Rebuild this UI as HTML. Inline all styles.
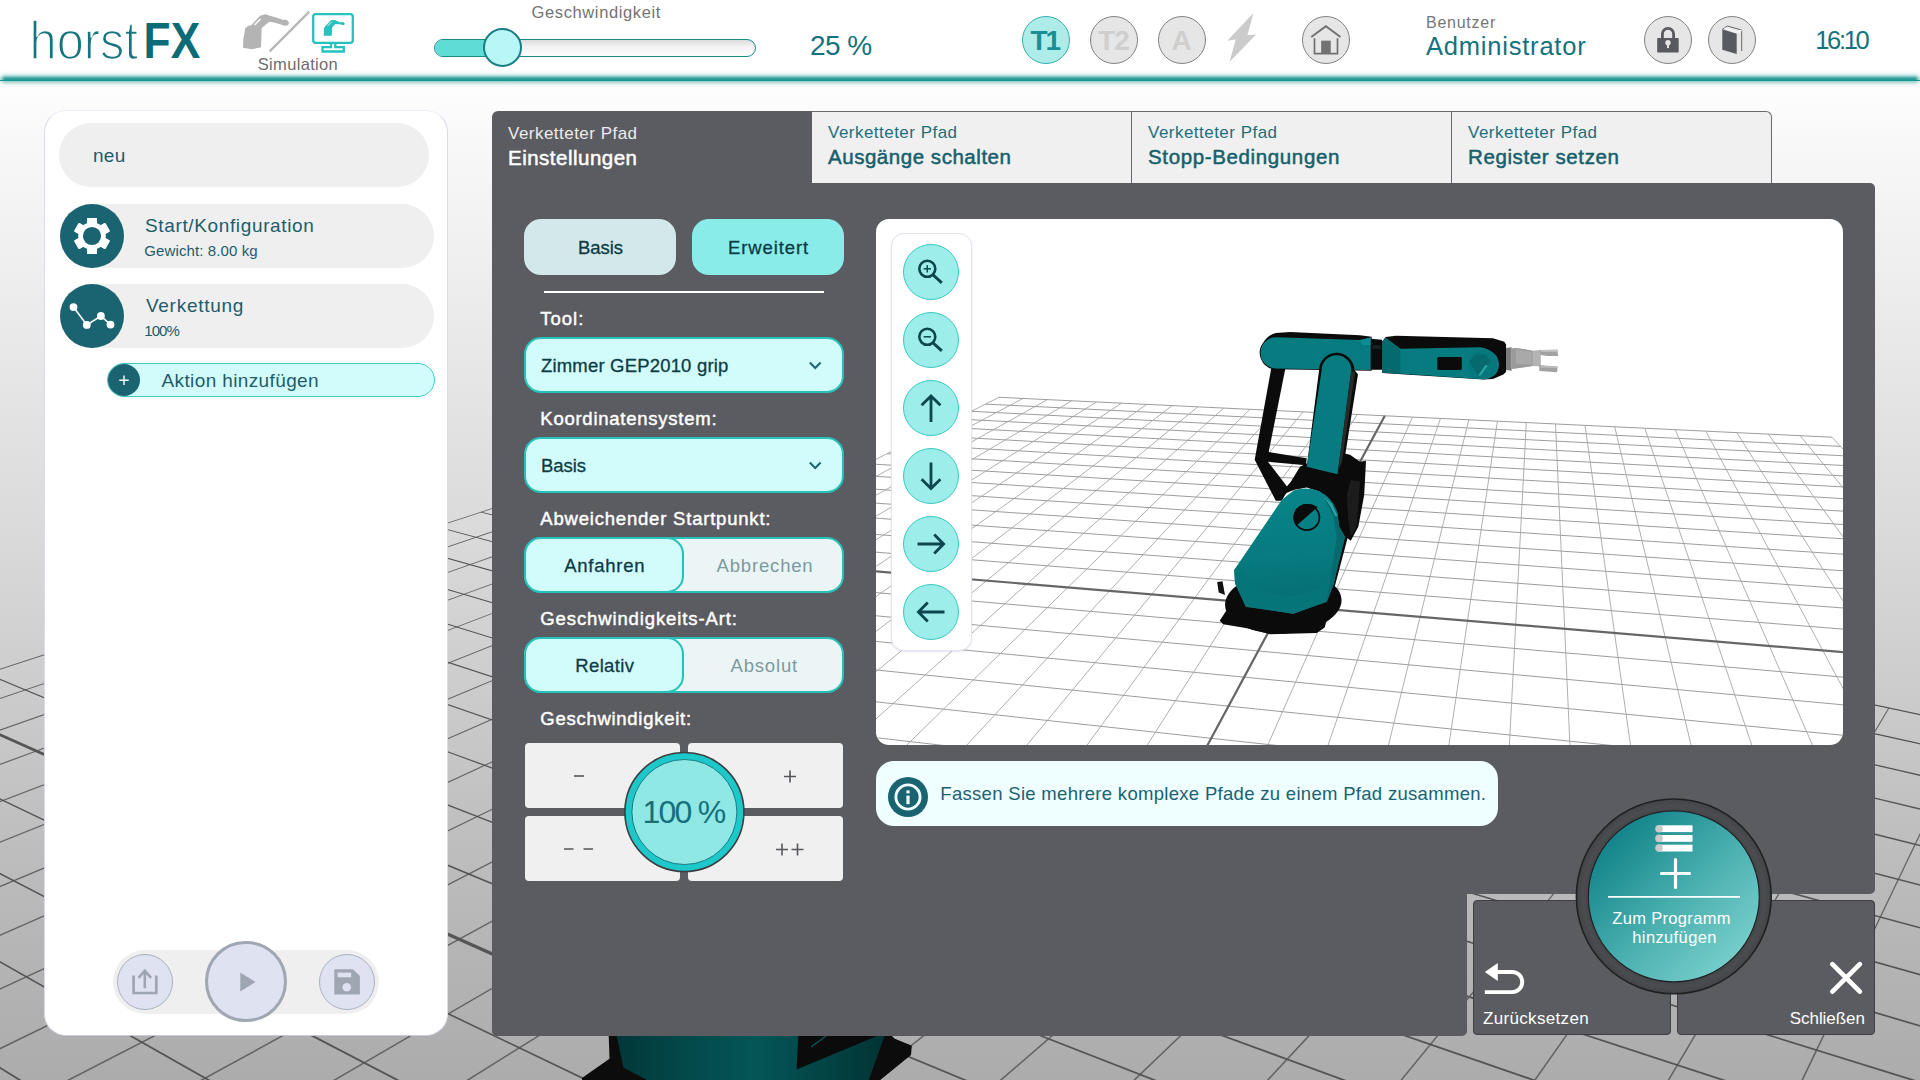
<!DOCTYPE html>
<html lang="de"><head><meta charset="utf-8"><title>horstFX</title>
<style>
*{box-sizing:border-box;margin:0;padding:0}
html,body{width:1920px;height:1080px;overflow:hidden}
body{position:relative;font-family:"Liberation Sans",sans-serif;
background:linear-gradient(to bottom,#ffffff 0px,#fefefe 85px,#f9f9f9 130px,#f0f0f0 250px,#e4e4e4 400px,#dbdbdb 520px,#cdcdcd 680px,#c0c0c0 820px,#b5b5b5 950px,#acacac 1080px)}
.a{position:absolute}
.t{position:absolute;white-space:nowrap;line-height:1}
svg{position:absolute;overflow:visible}
.circ{position:absolute;border-radius:50%}
.gbtn{background:#e6e6e6;border:1px solid #828282}
.pill{position:absolute;background:#efefef;border-radius:32px}
.dark{background:#5b5c61}
.dd{position:absolute;left:524px;width:320px;height:56px;background:#d2fcfc;border:2px solid #26c2ba;border-radius:17px}
.tog{position:absolute;left:524px;width:320px;height:56px;background:#ecf5f6;border:2px solid #26c2ba;border-radius:17px}
.tog .on{position:absolute;left:-2px;top:-2px;width:160px;height:56px;background:#d2fcfc;border:2px solid #26c2ba;border-radius:17px}
.sb{position:absolute;background:#f0f0f0;border-radius:4px}
.vb{position:absolute;left:903px;width:56px;height:56px;border-radius:50%;background:#9deeea;border:1px solid #35c8c0}
.bb{position:absolute;top:900px;height:135px;background:#5b5c61;border:1px solid #3e3f43;border-radius:4px}
</style></head>
<body>
<svg class="a" style="left:0;top:0" width="1920" height="1080" viewBox="0 0 1920 1080">
<path d="M676.4 448L534 494.5L365.5 549.4L162.9 615.5L-85.3 696.5L-396.3 797.9L-797.6 928.8L-1335 1104.1L-2092 1351L-2091.5 1352.8L-1334.5 1105.6L-797.2 930.1L-396 799L-85 697.5L163.2 616.4L365.7 550.3L534.2 495.2L676.6 448.7ZM714.3 456.1L572.8 504L404.9 560.9L202.4 629.4L-46.6 713.7L-360.2 819.9L-767.4 957.7L-1317.3 1143.9L-2101.1 1409.2L-2100.4 1411.1L-1316.8 1145.4L-767 959L-359.8 821L-46.2 714.7L202.7 630.3L405.2 561.7L573.1 504.8L714.5 456.8ZM753.3 464.5L612.9 513.9L445.8 572.7L243.6 643.8L-6.1 731.7L-322.3 842.9L-735.5 988.3L-1298.5 1186.4L-2110.8 1472.2L-2110.1 1474.2L-1297.9 1188L-735 989.7L-321.9 844.1L-5.8 732.7L243.9 644.8L446.1 573.5L613.2 514.7L753.5 465.2ZM793.5 473.1L654.3 524.1L488.2 584.9L286.4 658.8L36.2 750.5L-282.4 867.2L-701.6 1020.7L-1278.3 1232L-2121.5 1540.8L-2120.7 1542.9L-1277.6 1233.6L-701.1 1022.1L-281.9 868.4L36.6 751.6L286.7 659.8L488.5 585.8L654.6 524.9L793.8 473.8ZM835 482L697.1 534.6L532.1 597.7L331 674.5L80.4 770.2L-240.4 892.7L-665.7 1055.2L-1256.6 1280.9L-2133.1 1615.7L-2132.2 1617.8L-1255.9 1282.6L-665.1 1056.6L-239.9 893.9L80.8 771.3L331.4 675.4L532.4 598.5L697.4 535.4L835.2 482.7ZM877.7 491.1L741.4 545.5L577.7 610.9L377.5 690.8L126.8 790.8L-196.1 919.7L-627.4 1091.8L-1233.2 1333.5L-2145.8 1697.7L-2144.9 1699.9L-1232.5 1335.3L-626.9 1093.3L-195.6 920.9L127.2 791.9L377.8 691.8L578.1 611.7L741.8 546.3L878 491.9ZM921.9 500.6L787.3 556.8L625.1 624.6L425.9 707.8L175.4 812.5L-149.3 948.1L-586.7 1130.8L-1208 1390.4L-2159.8 1788L-2158.8 1790.3L-1207.2 1392.2L-586.1 1132.3L-148.8 949.4L175.9 813.6L426.3 708.8L625.5 625.5L787.6 557.6L922.2 501.3ZM967.5 510.4L834.8 568.5L674.4 638.8L476.6 725.5L226.4 835.2L-99.8 978.2L-543.2 1172.5L-1180.7 1451.9L-2175.2 1887.8L-2174.2 1890.2L-1179.9 1453.8L-542.6 1174L-99.3 979.5L226.9 836.3L477 726.5L674.8 639.7L835.2 569.3L967.8 511.1ZM1014.6 520.4L884.1 580.6L725.7 653.7L529.5 744.1L280.1 859L-47.4 1010L-496.7 1217.1L-1151 1518.8L-2192.4 1998.8L-2191.3 2001.3L-1150.1 1520.7L-495.9 1218.7L-46.8 1011.4L280.6 860.2L529.9 745.1L726.1 654.6L884.4 581.5L1015 521.2ZM1063.3 530.9L935.1 593.2L779 669.1L584.8 763.5L336.6 884.2L8.2 1043.8L-446.7 1265L-1118.7 1591.7L-2211.7 2123L-2210.4 2125.6L-1117.7 1593.7L-445.9 1266.6L8.8 1045.2L337.1 885.4L585.3 764.5L779.5 670L935.5 594L1063.7 531.6ZM1113.7 541.7L988.1 606.3L834.6 685.2L642.8 783.8L396.1 910.7L67.3 1079.8L-393 1316.5L-1083.3 1671.4L-2233.4 2262.8L-2231.9 2265.6L-1082.2 1673.5L-392.2 1318.1L68 1081.2L396.7 911.9L643.3 784.9L835.1 686.1L988.5 607.1L1114.1 542.4ZM1165.8 552.8L1043.1 619.8L892.6 702L703.5 805.2L458.9 938.6L130.2 1118.1L-335.1 1372L-1044.4 1759.1L-2257.9 2421.5L-2256.4 2424.3L-1043.2 1761.3L-334.1 1373.7L131 1119.5L459.6 939.8L704.1 806.2L893.1 702.9L1043.6 620.6L1166.3 553.6ZM1219.8 564.4L1100.3 633.9L953.1 719.5L767.3 827.5L525.4 968.2L197.4 1158.9L-272.4 1432.1L-1001.4 1856L-2286 2603.1L-2284.4 2605.9L-1000.2 1858.2L-271.4 1433.8L198.2 1160.3L526.1 969.4L767.9 828.6L953.7 720.4L1100.8 634.7L1220.3 565.2ZM1275.8 576.4L1159.8 648.5L1016.4 737.8L834.3 851L595.7 999.5L269.3 1202.6L-204.4 1497.3L-953.8 1963.5L-2318.4 2812.9L-2316.7 2815.6L-952.3 1965.8L-203.3 1499.1L270.2 1204.1L596.5 1000.7L835 852.1L1017 738.7L1160.4 649.4L1276.3 577.1ZM1333.8 588.8L1221.8 663.8L1082.5 756.9L904.8 875.8L670.3 1032.7L346.3 1249.5L-130.3 1568.3L-900.5 2083.5L-2356.3 3058L-2354.5 3060.7L-898.9 2085.9L-129.1 1570.1L347.3 1250.9L671.1 1034L905.6 876.9L1083.1 757.9L1222.3 664.6L1334.3 589.6ZM1456.5 615.1L1353.5 696.2L1224.3 798L1057.5 929.4L833.9 1105.5L518.3 1354.1L39.6 1731.2L-773 2371.2L-2455.1 3697.2L-2453.1 3699.7L-771 2373.7L41.1 1733L519.5 1355.6L834.8 1106.8L1058.4 930.4L1225.1 798.9L1354.2 697.1L1457.1 615.9ZM1521.5 629L1423.7 713.5L1300.5 820L1140.3 958.4L923.8 1145.6L614.7 1412.8L137.6 1825.2L-695.7 2545.6L-2521.2 4124.8L-2519.1 4127.2L-693.6 2548L139.3 1827.1L616 1414.3L924.9 1146.8L1141.3 959.5L1301.3 821L1424.4 714.3L1522.1 629.8ZM1589 643.5L1497 731.6L1380.5 843.2L1228 989.2L1020 1188.4L719.3 1476.4L246.2 1929.3L-606.6 2746.4L-2604.1 4660.9L-2601.8 4663.2L-604.4 2748.7L248.1 1931.3L720.7 1477.9L1021.1 1189.7L1229 990.3L1381.3 844.1L1497.8 732.4L1589.7 644.2ZM1659.3 658.6L1573.7 750.5L1464.6 867.6L1320.9 1021.8L1123 1234.3L833 1545.6L367.3 2045.5L-502.9 2980.3L-2711 5353L-2708.6 5355.2L-500.5 2982.5L369.4 2047.4L834.6 1547.1L1124.3 1235.5L1322 1022.9L1465.5 868.5L1574.5 751.3L1660 659.3ZM1732.5 674.3L1653.9 770.3L1553.2 893.3L1419.6 1056.5L1233.6 1283.6L957.2 1621.2L503.2 2175.8L-380.5 3256.1L-2854.3 6280.7L-2851.8 6282.8L-378 3258.1L505.5 2177.7L959 1622.6L1235 1284.8L1420.7 1057.5L1554.2 894.1L1654.8 771L1733.3 674.9ZM1808.8 690.6L1738 791L1646.7 920.3L1524.5 1093.4L1352.8 1336.7L1093.4 1704.1L656.6 2322.9L-234.1 3586.2L-3056.4 7588.9L-3053.8 7590.7L-231.5 3588L659.2 2324.8L1095.4 1705.5L1354.3 1337.8L1525.8 1094.3L1647.8 921.1L1738.9 791.7L1809.7 691.2ZM1888.4 707.7L1826.1 812.7L1745.4 948.9L1636.4 1132.7L1481.4 1394L1243.4 1795.4L831.3 2490.5L-55.7 3988.3L-3362.7 9572L-3359.9 9573.6L-53 3989.9L834.1 2492.2L1245.6 1796.7L1483.1 1395L1637.8 1133.5L1746.6 949.6L1827.2 813.4L1889.3 708.3ZM1971.5 725.6L1918.7 835.6L1849.8 979.2L1755.9 1174.7L1620.8 1456.1L1409.4 1896.5L1032 2683.1L166.4 4488.9L-3881.9 12934.1L-3879.1 12935.5L169.3 4490.3L1034.9 2684.4L1411.8 1897.6L1622.7 1457L1757.5 1175.4L1851.1 979.8L1919.8 836.1L1972.5 726ZM2058.4 744.2L2017.2 856.7L1963.3 1003.5L1889.9 1203.3L1784.3 1490.9L1619.1 1940.8L1324.5 2744.2L649.1 4587.3L-2500.8 13183.7L-2497.8 13184.8L652.1 4588.4L1327.5 2745.3L1621.7 1941.7L1786.3 1491.6L1891.5 1203.9L1964.6 1004L2018.3 857.1L2059.5 744.6ZM2149.4 763.8L2120.2 878.6L2082.1 1028.5L2030.3 1232.2L1955.8 1525.4L1839.5 1983.2L1632.5 2799L1160.5 4661.1L-998.8 13181L-995.7 13181.8L1163.6 4661.9L1635.6 2799.8L1842.1 1983.9L1957.9 1525.9L2032 1232.6L2083.6 1028.8L2121.4 878.9L2150.5 764ZM2244.6 784.2L2228.1 901.5L2206.5 1054.6L2177.1 1262.5L2135 1561.4L2069.2 2027.5L1952.7 2855.9L1688.5 4737.2L503.2 13178.4L506.4 13178.9L1691.7 4737.6L1955.9 2856.3L2072 2027.9L2137.1 1561.7L2178.9 1262.7L2208 1054.8L2229.4 901.7L2245.8 784.4ZM2344.5 805.7L2341.1 925.6L2336.8 1081.9L2330.8 1294.2L2322.3 1599L2309 2073.6L2285.8 2915L2233.8 4815.8L2005.2 13175.8L2008.4 13175.9L2237 4815.9L2289 2915.1L2311.9 2073.7L2324.5 1599L2332.7 1294.2L2338.3 1082L2342.5 925.6L2345.7 805.7ZM2449.4 828.2L2459.8 950.8L2473.4 1110.6L2491.8 1327.4L2518.3 1638.4L2559.5 2121.9L2632.7 2976.7L2797.4 4897.1L3507.3 13173.2L3510.5 13173L2800.6 4896.8L2635.8 2976.4L2562.4 2121.6L2520.6 1638.2L2493.7 1327.2L2475 1110.5L2461.2 950.7L2450.6 828.1ZM2559.6 851.9L2584.5 977.4L2616.8 1140.7L2660.8 1362.2L2723.7 1679.6L2821.4 2172.3L2994.1 3040.9L3380.1 4981L5009.4 13170.6L5012.5 13170L3383.2 4980.4L2997.2 3040.2L2824.3 2171.7L2726 1679.2L2662.7 1361.9L2618.5 1140.4L2585.9 977.1L2560.8 851.6ZM2675.6 876.8L2715.6 1005.2L2767.6 1172.4L2838.2 1398.8L2939.1 1722.9L3095.5 2225.1L3371 3107.8L3982.9 5067.9L6511.5 13168L6514.5 13167.1L3986 5067L3374.1 3106.8L3098.5 2224.2L2941.4 1722.2L2840.1 1398.2L2769.3 1171.9L2717 1004.8L2676.8 876.4Z" fill="#636363"/>
<path d="M676.4 448.8L824.5 480.5L990.9 516.2L1179.3 556.6L1394.2 602.6L1641.7 655.7L1929.9 717.4L2269.6 790.2L2676 877.3L2676.4 875.9L2269.9 788.9L1930.1 716.2L1641.9 654.5L1394.4 601.6L1179.5 555.6L991.1 515.3L824.7 479.7L676.6 448ZM640.6 460.5L789.9 493.6L958.1 531L1149 573.3L1367.6 621.9L1620.3 678L1915.8 743.6L2266.1 821.3L2687.8 915L2688.1 913.5L2266.4 820L1916.1 742.3L1620.6 676.8L1367.8 620.8L1149.3 572.3L958.3 530L790.1 492.7L640.8 459.6ZM603.3 472.6L753.8 507.3L923.7 546.4L1117.2 591L1339.5 642.2L1597.6 701.6L1900.9 771.5L2262.3 854.7L2700.4 955.6L2700.8 954.1L2262.7 853.3L1901.2 770.2L1597.9 700.5L1339.8 641.1L1117.4 590L923.9 545.5L754 506.4L603.5 471.8ZM564.4 485.4L715.9 521.6L887.6 562.7L1083.7 609.6L1309.8 663.7L1573.5 726.8L1884.9 801.3L2258.3 890.6L2714.2 999.6L2714.5 998L2258.6 889.1L1885.3 799.9L1573.8 725.6L1310.1 662.6L1083.9 608.6L887.8 561.7L716.1 520.7L564.6 484.5ZM523.7 498.7L676.2 536.6L849.6 579.8L1048.3 629.2L1278.4 686.5L1547.9 753.5L1867.8 833.2L2254 929.2L2729.1 1047.5L2729.5 1045.8L2254.3 927.7L1868.2 831.8L1548.2 752.3L1278.7 685.3L1048.6 628.2L849.8 578.8L676.5 535.7L523.9 497.8ZM481.1 512.6L634.6 552.4L809.6 597.8L1010.9 650L1245 710.7L1520.5 782.1L1849.5 867.4L2249.3 971L2745.3 1099.7L2745.8 1097.9L2249.7 969.5L1849.9 866L1520.8 780.8L1245.3 709.5L1011.2 648.9L809.9 596.7L634.8 551.4L481.3 511.7ZM436.5 527.1L590.9 568.9L767.5 616.7L971.4 671.9L1209.5 736.4L1491.3 812.6L1829.8 904.2L2244.2 1016.3L2763.1 1156.8L2763.6 1154.9L2244.6 1014.7L1830.2 902.7L1491.6 811.3L1209.9 735.1L971.7 670.8L767.8 615.7L591.1 568L436.7 526.2ZM389.7 542.4L544.9 586.3L723 636.7L929.5 695.2L1171.7 763.7L1459.9 845.3L1808.5 943.9L2238.6 1065.6L2782.7 1219.6L2783.2 1217.7L2239.1 1063.9L1808.9 942.4L1460.3 843.9L1172.1 762.5L929.8 694L723.3 635.7L545.2 585.3L390 541.5ZM340.6 558.4L496.5 604.6L676 657.9L885 719.9L1131.4 792.9L1426.3 880.4L1785.5 986.9L2232.6 1119.5L2804.3 1289L2804.9 1287L2233.1 1117.7L1785.9 985.3L1426.7 879L1131.8 791.6L885.3 718.7L676.3 656.8L496.8 603.6L340.9 557.5ZM289 575.3L445.4 624L626.2 680.3L837.6 746.1L1088.3 824.2L1390.1 918.2L1760.5 1033.5L2225.9 1178.5L2828.3 1366.1L2829 1364L2226.5 1176.6L1761 1031.9L1390.5 916.7L1088.7 822.8L838 744.9L626.5 679.2L445.7 622.9L289.3 574.3ZM234.8 593L391.5 644.4L573.4 704L787.2 774.1L1042 857.7L1350.9 959L1733.2 1084.3L2218.6 1243.5L2855.2 1452.2L2855.9 1450L2219.2 1241.5L1733.8 1082.6L1351.4 957.5L1042.5 856.3L787.6 772.9L573.8 702.9L391.8 643.3L235.1 592ZM177.6 611.7L334.4 666L517.3 729.3L733.3 804L992.3 893.7L1308.6 1003.2L1703.5 1139.9L2210.5 1315.4L2885.3 1549L2886.1 1546.7L2211.2 1313.4L1704.1 1138.1L1309.1 1001.6L992.8 892.3L733.7 802.7L517.7 728.1L334.8 664.9L178 610.6ZM117.3 631.4L274 688.8L457.6 756.1L675.6 836L938.7 932.5L1262.5 1051.2L1670.8 1200.9L2201.5 1395.5L2919.5 1658.7L2920.4 1656.2L2202.3 1393.3L1671.5 1199L1263.1 1049.6L939.2 931L676.1 834.7L458 754.9L274.4 687.7L117.7 630.3ZM53.6 652.2L209.9 713.1L393.9 784.8L613.7 870.4L880.8 974.4L1212.3 1103.6L1634.7 1268.2L2191.4 1485.1L2958.5 1783.9L2959.5 1781.3L2192.3 1482.8L1635.5 1266.3L1212.9 1101.9L881.4 972.9L614.2 869L394.4 783.5L210.3 711.9L54 651.1ZM-13.9 674.2L141.7 738.9L325.8 815.4L547.1 907.3L818 1019.9L1157.3 1161L1594.7 1342.8L2180 1586.1L3003.5 1928.3L3004.7 1925.5L2181 1583.7L1595.5 1340.8L1158 1159.2L818.6 1018.4L547.7 905.9L326.4 814.1L142.2 737.7L-13.4 673.1ZM-161.3 722.3L-8.4 795.6L174.6 883.4L397.5 990.3L675 1123.5L1029.9 1293.8L1500.1 1519.3L2152.3 1832.2L3117.9 2295.2L3119.3 2292.3L2153.6 1829.6L1501.1 1517.1L1030.8 1291.9L675.8 1121.8L398.2 988.9L175.2 882.1L-7.8 794.4L-160.8 721.2ZM-242 748.6L-91.3 827L90.2 921.3L313 1037.2L593.1 1182.7L955.7 1371.2L1443.5 1624.8L2135.2 1984.2L3192.1 2533.2L3193.6 2530.4L2136.6 1981.5L1444.7 1622.4L956.7 1369.2L594 1181L313.8 1035.6L90.9 920L-90.7 825.8L-241.5 747.5ZM-328.1 776.7L-180.2 860.6L-0.9 962.3L221.1 1088.2L502.9 1248L872.7 1457.7L1379.1 1744.8L2115.2 2162.1L3282.8 2823.6L3284.3 2820.9L2116.7 2159.3L1380.5 1742.4L873.9 1455.6L503.9 1246.2L222 1086.6L-0.1 960.9L-179.5 859.3L-327.5 775.6ZM-420.1 806.7L-275.8 896.7L-99.6 1006.7L120.5 1143.9L403.1 1320.2L779.4 1554.9L1305.1 1882.9L2091.4 2373.1L3395.8 3186L3397.5 3183.3L2093.1 2370.4L1306.7 1880.3L780.7 1552.8L404.3 1318.4L121.5 1142.3L-98.7 1005.2L-275 895.5L-419.3 805.6ZM-518.5 838.9L-378.8 935.7L-206.8 1054.9L10 1205.2L292 1400.6L673.7 1665.1L1219.1 2043.2L2062.8 2627.4L3540.9 3650.9L3542.7 3648.2L2064.7 2624.7L1220.9 2040.5L675.2 1663L293.3 1398.8L11.2 1203.6L-205.8 1053.4L-377.9 934.4L-517.7 837.7ZM-624.1 873.3L-490.1 977.8L-323.8 1107.5L-111.8 1272.7L167.7 1490.6L552.9 1791L1118.1 2231.5L2027.7 2939.9L3733.7 4268.7L3735.7 4266.2L2029.7 2937.4L1120.1 2228.9L554.7 1788.7L169.1 1488.7L-110.5 1271.1L-322.7 1106L-489.1 976.5L-623.2 872.2ZM-737.8 910.4L-610.9 1023.4L-451.9 1165L-246.9 1347.6L27.5 1592.1L413.7 1936.1L997.7 2456L1983.5 3333.3L4002.5 5130.1L4004.7 5127.7L1985.6 3330.9L999.8 2453.6L415.7 1933.8L29.1 1590.2L-245.5 1346L-450.7 1163.6L-609.8 1022.2L-736.8 909.2ZM-860.4 950.4L-742.3 1073.1L-592.8 1228.3L-397.6 1431.2L-131.8 1707.3L251.3 2105.3L851.7 2728.3L1926.2 3843.4L4403.3 6414.2L4405.6 6412L1928.5 3841.2L854 2726.1L253.6 2103L-129.9 1705.4L-396 1429.6L-591.4 1227L-741 1071.8L-859.3 949.3ZM-993.1 993.6L-885.8 1127.3L-748.6 1298.3L-566.7 1524.9L-314.3 1839.3L59.7 2304.9L670.8 3065.5L1848.9 4531.5L5064.9 8533.5L5067.3 8531.5L1851.4 4529.5L673.3 3063.5L62.1 2302.9L-312.1 1837.5L-564.8 1523.3L-746.9 1297L-884.4 1126.1L-991.8 992.6ZM-1137.2 1040.6L-1043.2 1186.7L-921.6 1376L-757.8 1630.7L-525.6 1992.1L-170.1 2544.3L441.1 3493.9L1739 5510.3L6364 12695.5L6366.7 12693.8L1741.7 5508.6L443.8 3492.2L-167.4 2542.6L-522.9 1990.3L-755.6 1629.3L-919.7 1374.8L-1041.6 1185.7L-1135.7 1039.6ZM-1294.1 1091.7L-1220.4 1244.3L-1125 1441.8L-996.6 1707.7L-814.5 2084.6L-535.9 2660.4L-57.3 3649.5L957.1 5745.8L4550.3 13171.9L4553.2 13170.5L960 5744.4L-54.4 3648.1L-533 2659L-811.6 2083.2L-994.1 1706.5L-1122.9 1440.8L-1218.6 1243.4L-1292.5 1090.9ZM-1465.8 1147.6L-1414.4 1306.5L-1347.9 1512L-1258.7 1788.1L-1132.3 2178.4L-939.7 2772.7L-610.8 3787.4L78.1 5912.6L2432.4 13175.6L2435.5 13174.6L81.2 5911.6L-607.7 3786.4L-936.6 2771.7L-1129.3 2177.4L-1256 1787.2L-1345.6 1511.3L-1412.4 1305.9L-1464 1147ZM-1654.3 1209L-1627.1 1374.8L-1592.1 1588.9L-1545.1 1875.9L-1478.6 2280.6L-1377.6 2894.5L-1206.3 3935.7L-852 6089L314.6 13179.3L317.8 13178.7L-848.8 6088.5L-1203.1 3935.1L-1374.4 2893.9L-1475.4 2280.1L-1542.1 1875.4L-1589.6 1588.5L-1624.9 1374.4L-1652.3 1208.6ZM-1862.2 1276.7L-1861.5 1450L-1860.5 1673.4L-1859.3 1972.2L-1857.2 2392.4L-1854 3026.9L-1848.7 4095.7L-1837.8 6276.1L-1803.2 13182.9L-1800 13182.9L-1834.6 6276.1L-1845.5 4095.6L-1850.8 3026.9L-1854 2392.4L-1856.2 1972.2L-1857.9 1673.4L-1859.2 1450L-1860.2 1276.6ZM-2092.8 1351.7L-2121 1533.2L-2157.2 1766.8L-2205.6 2078.4L-2273 2515.2L-2374.4 3171.7L-2543.8 4268.8L-2884.5 6474.7L-3921 13186.6L-3917.8 13187.1L-2881.3 6475.2L-2540.7 4269.3L-2371.2 3172.2L-2269.9 2515.7L-2202.4 2078.9L-2154.5 1767.2L-2118.6 1533.6L-2090.7 1352.1Z" fill="#545454"/>
<path d="M1393.6 601.2L1285.8 679.1L1151.3 776.3L978.6 901.1L748.8 1067.1L428.3 1298.7L-50.1 1644.8L-841.3 2217.7L-2401.7 3347.5L-2398.8 3351.5L-838.4 2221.7L-47.2 1648.9L431 1302.4L751.1 1070.2L980.5 903.7L1152.9 778.6L1287.3 681.1L1395 603ZM-85.7 698.2L68.8 767L252.6 848.9L474.8 948L749.2 1070.4L1096.3 1225.1L1549.6 1427.2L2166.6 1701.8L3055.6 2097.4L3057.6 2092.9L2168.7 1697.3L1551.6 1422.6L1098.1 1221.2L750.7 1066.9L476.2 944.9L253.8 846.1L69.9 764.4L-84.6 695.8Z" fill="#555"/>
<g>
<defs><linearGradient id="rb" x1="0" y1="0" x2="1" y2="0"><stop offset="0" stop-color="#023738"/><stop offset="0.25" stop-color="#03484a"/><stop offset="0.52" stop-color="#045657"/><stop offset="0.8" stop-color="#034243"/><stop offset="1" stop-color="#023334"/></linearGradient></defs>
<path d="M608.5 1030 L609.5 1058.7 L582 1078 L582 1080 L880 1080 L911 1054.7 L911.5 1045.8 L895 1039 L886 1030 Z" fill="#0c0c0c"/>
<path d="M615.4 1030 L623.4 1067.6 L647 1080 L869 1080 L884.7 1036 L884.7 1030 Z" fill="url(#rb)"/>
<path d="M798.6 1030 L796.6 1069.5 L877 1036 L877 1030 Z" fill="#0b0b0b"/>
<path d="M811 1047 L826 1036" stroke="#045657" stroke-width="1.5" fill="none"/>
<path d="M884.7 1036 L869 1080 L880 1080 L911 1054.7 L911.5 1045.8 L895 1039 Z" fill="#0c0c0c"/>
</g>
</svg>
<div class="a" style="left:0;top:0;width:1920px;height:77px;background:#fff"></div>
<div class="a" style="left:0;top:70px;width:1920px;height:18px;background:linear-gradient(to bottom,rgba(26,149,145,0) 1px,rgba(26,149,145,0.1) 3.8px,rgba(26,149,145,0.25) 5px,rgba(26,149,145,0.48) 6.4px,rgba(26,149,145,0.75) 7.5px,rgba(26,149,145,0.88) 8.4px,rgba(26,149,145,1) 10.2px,rgba(26,149,145,1) 10.8px,rgba(26,149,145,0.45) 11.3px,rgba(26,149,145,0.25) 12.85px,rgba(26,149,145,0.05) 15.4px,rgba(26,149,145,0) 18px)"></div>
<div class="a" style="left:0;top:70px;width:5px;height:9.6px;background:linear-gradient(to right,rgba(255,255,255,.75),rgba(255,255,255,0))"></div>
<div class="a" style="left:0;top:81.2px;width:5px;height:7px;background:linear-gradient(to right,rgba(253,253,253,.7),rgba(253,253,253,0))"></div>
<div class="a" style="right:0;top:70px;width:5px;height:9.6px;background:linear-gradient(to left,rgba(255,255,255,.75),rgba(255,255,255,0))"></div>
<div class="a" style="right:0;top:81.2px;width:5px;height:7px;background:linear-gradient(to left,rgba(253,253,253,.7),rgba(253,253,253,0))"></div>
<svg class="a" style="left:0;top:0" width="420" height="78" viewBox="0 0 420 78">
<text x="29.6" y="58.5" font-family="Liberation Sans" font-size="53.2" fill="#17757f" stroke="#fff" stroke-width="1.6" textLength="108.4" lengthAdjust="spacingAndGlyphs">horst</text>
<text x="143.6" y="57.6" font-family="Liberation Sans" font-weight="700" font-size="50" fill="#0b6c77" textLength="56.6" lengthAdjust="spacingAndGlyphs">FX</text>
<path d="M243 47.7 L243.3 39.3 L245.3 28 L248.3 25.7 L251.3 25.3 L260 15.7 L265.7 14.3 L270.7 16 L275.3 17.3 L282.7 19.7 L286.7 19.7 L289 22.3 L288.3 25.3 L284.7 25.7 L275.3 22.7 L269.3 21.7 L261.7 28 L261 47.3 L252 49.3 Z" fill="#b4b4b4"/>
<path d="M254.5 25 L260.5 19" stroke="#fff" stroke-width="1.5" fill="none"/>
<path d="M269.7 51.3 L309.3 11.7" stroke="#b8b8b8" stroke-width="2.4" fill="none"/>
<rect x="313.2" y="14.2" width="39.6" height="28.6" rx="2.5" fill="none" stroke="#27c1bf" stroke-width="2.3"/>
<path d="M331 43.5 V47.2 H322.5 V51.5 H343.8 V47.2 H335.3 V43.5" fill="none" stroke="#27c1bf" stroke-width="2.3"/>
<path d="M323.7 35.7 L324 28 L325.7 25.7 L331 20.3 L334.7 20 L340 22.3 L343.3 22 L345 24 L343.3 25.3 L340 24.3 L335.3 24 L332.3 27.3 L331.7 35.7 Z" fill="#27c1bf"/>
<path d="M327.5 26 L331.5 22" stroke="#fff" stroke-width="0.8" fill="none"/>
</svg>
<div class="t " style="left:257.8px;top:56.1px;font-size:16.5px;color:#6c6c6c;letter-spacing:0.316px;">Simulation</div><div class="t " style="left:531.5px;top:4.3px;font-size:16.5px;color:#737373;letter-spacing:0.624px;">Geschwindigkeit</div><div class="a" style="left:434px;top:39px;width:322px;height:18px;border:1px solid #188b8d;border-radius:9px;background:linear-gradient(to bottom,#dcdcdc,#f4f4f4 45%,#fcfcfc);overflow:hidden"><div class="a" style="left:0;top:0;width:70px;height:16px;background:#5fdcd6"></div></div>
<div class="circ" style="left:483px;top:28.2px;width:39px;height:39px;background:#b9f7f7;border:2px solid #1c7d85"></div>
<div class="t " style="left:810px;top:32.4px;font-size:28px;color:#13727d;letter-spacing:-0.58px;">25 %</div><div class="circ" style="left:1022px;top:16px;width:48px;height:48px;background:#aeecea;border:1px solid #33b0aa"></div>
<div class="t " style="left:1030.5px;top:26.9px;font-size:28px;color:#1a8f93;font-weight:700;letter-spacing:-2.088px;">T1</div><div class="circ gbtn" style="left:1090px;top:16px;width:48px;height:48px"></div>
<div class="t " style="left:1098px;top:26.9px;font-size:28px;color:#cfcfcf;font-weight:700;letter-spacing:-0.838px;">T2</div><div class="circ gbtn" style="left:1158px;top:16px;width:48px;height:48px"></div>
<div class="t " style="left:1171.5px;top:26.9px;font-size:28px;color:#cfcfcf;font-weight:700;letter-spacing:0.779px;">A</div><svg class="a" style="left:0;top:0" width="1920" height="78" viewBox="0 0 1920 78">
<path d="M1253.5 13.1 L1227.3 40.7 L1235.7 39.6 L1229.5 62.1 L1256.1 34.4 L1247.4 35.3 Z" fill="#cbcbcb"/>
</svg>
<div class="circ gbtn" style="left:1302px;top:16px;width:48px;height:48px"></div>
<svg class="a" style="left:1302px;top:16px" width="48" height="48" viewBox="0 0 48 48">
<path d="M9.25 21.1 L23.9 10.25 L38.5 21.1" fill="none" stroke="#707070" stroke-width="1.9"/>
<path d="M12.5 22.25 V37.6 H35.5 V22.25" fill="none" stroke="#707070" stroke-width="1.7"/>
<rect x="19.15" y="24.65" width="9.6" height="13" fill="#727272"/>
</svg>
<div class="t " style="left:1426px;top:14.7px;font-size:16px;color:#777;letter-spacing:0.745px;">Benutzer</div><div class="t " style="left:1426px;top:34px;font-size:25.5px;color:#13727d;letter-spacing:0.791px;">Administrator</div><div class="circ gbtn" style="left:1644px;top:16px;width:48px;height:48px"></div>
<div class="circ gbtn" style="left:1708px;top:16px;width:48px;height:48px"></div>
<svg class="a" style="left:1644px;top:16px" width="48" height="48" viewBox="0 0 48 48">
<path d="M18.4 23 V18 a5.6 5.6 0 0 1 11.2 0 V23" fill="none" stroke="#595a5f" stroke-width="2.8"/>
<rect x="13.2" y="22" width="21.5" height="14.5" rx="0.8" fill="#595a5f"/>
<circle cx="24" cy="26.8" r="2.7" fill="#e6e6e6"/><rect x="23" y="27.5" width="2" height="4.6" fill="#e6e6e6"/>
</svg>
<svg class="a" style="left:1708px;top:16px" width="48" height="48" viewBox="0 0 48 48">
<path d="M14.3 13.3 L28.7 17.7 V38 L14.3 33.7 Z" fill="#595a5f"/>
<path d="M14.3 13.3 L19.3 10 L33.7 14 V35" fill="none" stroke="#66676c" stroke-width="1"/>
<path d="M16.5 12.3 L30.7 16.3 M30.7 16.3 L33.5 14.2" fill="none" stroke="#f6f6f6" stroke-width="1.6"/>
</svg>
<div class="t " style="left:1815.3px;top:27.8px;font-size:25.5px;color:#13727d;letter-spacing:-2.363px;">16:10</div><div class="a" style="left:44px;top:110px;width:404px;height:926px;background:#fff;border:1px solid #d9dbec;border-top-color:#ededf5;border-bottom-color:#c6cae0;border-radius:22px"></div>
<div class="pill" style="left:59px;top:123px;width:370px;height:64px"></div>
<div class="t " style="left:93px;top:146.4px;font-size:19px;color:#1d5c6b;letter-spacing:0.266px;">neu</div><div class="pill" style="left:60px;top:204px;width:374px;height:64px"></div>
<div class="circ" style="left:60px;top:204px;width:64px;height:64px;background:#1a6370"></div>
<div class="t " style="left:145px;top:215.6px;font-size:19px;color:#1d5c6b;letter-spacing:0.638px;">Start/Konfiguration</div><div class="t " style="left:144.3px;top:242.9px;font-size:15px;color:#1d5c6b;letter-spacing:0.111px;">Gewicht: 8.00 kg</div><div class="pill" style="left:60px;top:284px;width:374px;height:64px"></div>
<div class="circ" style="left:60px;top:284px;width:64px;height:64px;background:#1a6370"></div>
<div class="t " style="left:146px;top:295.6px;font-size:19px;color:#1d5c6b;letter-spacing:0.716px;">Verkettung</div><div class="t " style="left:144.3px;top:322.9px;font-size:15px;color:#1d5c6b;letter-spacing:-0.966px;">100%</div><svg class="a" style="left:60px;top:204px" width="64" height="64" viewBox="-32 -32 64 64">
<g fill="#fff"><rect x="-5" y="-18" width="10" height="36" rx="1" transform="rotate(0)"/><rect x="-5" y="-18" width="10" height="36" rx="1" transform="rotate(60)"/><rect x="-5" y="-18" width="10" height="36" rx="1" transform="rotate(120)"/><rect x="-5" y="-18" width="10" height="36" rx="1" transform="rotate(180)"/><rect x="-5" y="-18" width="10" height="36" rx="1" transform="rotate(240)"/><rect x="-5" y="-18" width="10" height="36" rx="1" transform="rotate(300)"/><circle r="13.8"/></g><circle r="9.1" fill="#1a6370"/>
</svg>
<svg class="a" style="left:60px;top:284px" width="64" height="64" viewBox="0 0 64 64">
<path d="M13.5 23.1 L26.8 40.9 L40.9 32 L50.5 40.6" fill="none" stroke="#fff" stroke-width="1.6"/>
<g fill="#fff"><circle cx="13.5" cy="23.1" r="3.9"/><circle cx="26.8" cy="40.9" r="3.9"/><circle cx="40.9" cy="32" r="3.9"/><circle cx="50.5" cy="40.6" r="3.9"/></g>
</svg>
<div class="a" style="left:107px;top:363px;width:328px;height:34px;background:#d2fcfc;border:1px solid #3ccac2;border-radius:17px"></div>
<div class="circ" style="left:108px;top:364px;width:32px;height:32px;background:#1a6370"></div>
<svg class="a" style="left:108px;top:364px" width="32" height="32" viewBox="0 0 32 32"><path d="M11.3 16.2 H20.7 M16 11.5 V20.9" stroke="#fff" stroke-width="1.4" fill="none"/></svg>
<div class="t " style="left:161.5px;top:371.4px;font-size:19px;color:#1d5c6b;letter-spacing:0.379px;">Aktion hinzufügen</div><div class="pill" style="left:113px;top:949.7px;width:266px;height:64.3px"></div>
<div class="circ" style="left:117px;top:953.7px;width:56px;height:56px;background:#dfe2f0;border:1px solid #aab1be"></div>
<div class="circ" style="left:319.2px;top:953.7px;width:56px;height:56px;background:#dfe2f0;border:1px solid #aab1be"></div>
<div class="circ" style="left:205.3px;top:941.1px;width:81.4px;height:81.4px;background:#dfe2f0;border:3px solid #9ea7b2"></div>
<svg class="a" style="left:0;top:0" width="460" height="1080" viewBox="0 0 460 1080">
<path d="M240.3 972.6 L255.5 982 L240.3 991.6 Z" fill="#9ea6b1"/>
<path d="M133.6 975.5 V993 H156.3 V975.5" fill="none" stroke="#9ea6b1" stroke-width="2.7"/>
<path d="M144.8 988.2 V972" fill="none" stroke="#9ea6b1" stroke-width="2.6"/>
<path d="M138.5 977.8 L144.8 970.8 L151.1 977.8" fill="none" stroke="#9ea6b1" stroke-width="2.6"/>
<path d="M334.3 969.3 H353 L359.9 976 V994.5 H334.3 Z" fill="#9ea6b1"/>
<rect x="337.6" y="972.6" width="13.6" height="4.7" fill="#dfe2f0"/>
<circle cx="346.8" cy="987.2" r="4.3" fill="#dfe2f0"/>
</svg>
<div class="a" style="left:811px;top:111px;width:961px;height:74px;background:#f0f0f0;border:1px solid #696a6f;border-bottom:none;border-radius:0 6px 0 0"></div>
<div class="a" style="left:1131px;top:112px;width:1px;height:72px;background:#696a6f"></div>
<div class="a" style="left:1451px;top:112px;width:1px;height:72px;background:#696a6f"></div>
<div class="a dark" style="left:492px;top:111px;width:320px;height:80px;border-radius:6px 0 0 0"></div>
<div class="a dark" style="left:492px;top:183px;width:1383px;height:710.5px;border-radius:0 5px 5px 0"></div>
<div class="a dark" style="left:492px;top:880px;width:975px;height:155.6px;border-radius:0 0 5px 5px"></div>
<div class="t " style="left:508px;top:125px;font-size:17px;color:#ececec;letter-spacing:0.475px;">Verketteter Pfad</div><div class="t " style="left:508px;top:148px;font-size:20.5px;color:#ffffff;letter-spacing:0.493px;-webkit-text-stroke:0.5px #fff;">Einstellungen</div><div class="t " style="left:828px;top:123.7px;font-size:17px;color:#1d6f7b;letter-spacing:0.475px;">Verketteter Pfad</div><div class="t " style="left:828px;top:147px;font-size:20.5px;color:#155f6c;letter-spacing:0.536px;-webkit-text-stroke:0.5px #155f6c;">Ausgänge schalten</div><div class="t " style="left:1148px;top:123.7px;font-size:17px;color:#1d6f7b;letter-spacing:0.475px;">Verketteter Pfad</div><div class="t " style="left:1148px;top:147px;font-size:20.5px;color:#155f6c;letter-spacing:0.633px;-webkit-text-stroke:0.5px #155f6c;">Stopp-Bedingungen</div><div class="t " style="left:1468px;top:123.7px;font-size:17px;color:#1d6f7b;letter-spacing:0.475px;">Verketteter Pfad</div><div class="t " style="left:1468px;top:147px;font-size:20.5px;color:#155f6c;letter-spacing:0.605px;-webkit-text-stroke:0.5px #155f6c;">Register setzen</div><div class="a" style="left:524px;top:219px;width:152px;height:56px;background:#d3e8ea;border-radius:17px"></div>
<div class="a" style="left:692px;top:219px;width:152px;height:56px;background:#8aece8;border-radius:17px"></div>
<div class="t " style="left:578px;top:238.7px;font-size:18.5px;color:#0c3b44;letter-spacing:-0.048px;-webkit-text-stroke:0.3px #0c3b44;">Basis</div><div class="t " style="left:728px;top:238.7px;font-size:18.5px;color:#0c3b44;letter-spacing:0.89px;-webkit-text-stroke:0.3px #0c3b44;">Erweitert</div><div class="a" style="left:544px;top:291px;width:280px;height:2px;background:#fff"></div>
<div class="t " style="left:540.3px;top:309.5px;font-size:18.5px;color:#fff;letter-spacing:0.984px;-webkit-text-stroke:0.45px #fff;">Tool:</div><div class="t " style="left:540.3px;top:410.1px;font-size:18.5px;color:#fff;letter-spacing:0.75px;-webkit-text-stroke:0.45px #fff;">Koordinatensystem:</div><div class="t " style="left:540.3px;top:510.1px;font-size:18.5px;color:#fff;letter-spacing:0.798px;-webkit-text-stroke:0.45px #fff;">Abweichender Startpunkt:</div><div class="t " style="left:540.3px;top:610.1px;font-size:18.5px;color:#fff;letter-spacing:0.886px;-webkit-text-stroke:0.45px #fff;">Geschwindigkeits-Art:</div><div class="t " style="left:540.3px;top:710.1px;font-size:18.5px;color:#fff;letter-spacing:0.729px;-webkit-text-stroke:0.45px #fff;">Geschwindigkeit:</div><div class="dd" style="top:337px"></div>
<div class="t " style="left:541px;top:356.8px;font-size:18.5px;color:#0c3b44;letter-spacing:0.182px;-webkit-text-stroke:0.3px #0c3b44;">Zimmer GEP2010 grip</div><svg class="a" style="left:805px;top:359px" width="20" height="14" viewBox="0 0 20 14"><path d="M4.8 3.5 L10.2 9 L15.6 3.5" fill="none" stroke="#1a6870" stroke-width="2"/></svg>
<div class="dd" style="top:437px"></div>
<div class="t " style="left:541px;top:456.8px;font-size:18.5px;color:#0c3b44;letter-spacing:-0.048px;-webkit-text-stroke:0.3px #0c3b44;">Basis</div><svg class="a" style="left:805px;top:459px" width="20" height="14" viewBox="0 0 20 14"><path d="M4.8 3.5 L10.2 9 L15.6 3.5" fill="none" stroke="#1a6870" stroke-width="2"/></svg>
<div class="tog" style="top:537px"><div class="on"></div></div>
<div class="t " style="left:564.2px;top:556.6px;font-size:18.5px;color:#0c3b44;letter-spacing:0.739px;-webkit-text-stroke:0.3px #0c3b44;">Anfahren</div><div class="t " style="left:716.5px;top:556.6px;font-size:18.5px;color:#7b9aa0;letter-spacing:0.835px;">Abbrechen</div><div class="tog" style="top:637px"><div class="on"></div></div>
<div class="t " style="left:575.3px;top:656.6px;font-size:18.5px;color:#0c3b44;letter-spacing:0.35px;-webkit-text-stroke:0.3px #0c3b44;">Relativ</div><div class="t " style="left:730.5px;top:656.6px;font-size:18.5px;color:#7b9aa0;letter-spacing:0.828px;">Absolut</div><div class="sb" style="left:525px;top:743px;width:155px;height:65px"></div>
<div class="sb" style="left:688px;top:743px;width:155px;height:65px"></div>
<div class="sb" style="left:525px;top:816px;width:155px;height:65px"></div>
<div class="sb" style="left:688px;top:816px;width:155px;height:65px"></div>
<svg class="a" style="left:0;top:0" width="1920" height="1080" viewBox="0 0 1920 1080">
<g stroke="#55565a" stroke-width="1.6" fill="none">
<path d="M574 776 H584"/><path d="M784 776.5 H796 M790 770.5 V782.5"/>
<path d="M564 849 H573.5 M583.5 849 H593"/><path d="M776 849.5 H788 M782 843.5 V855.5 M791.5 849.5 H803.5 M797.5 843.5 V855.5"/>
</g>
<circle cx="684.4" cy="812" r="59.5" fill="#1cc8ca" stroke="#3d3e42" stroke-width="1.6"/>
<circle cx="684.4" cy="812" r="52.5" fill="#8fe8e4" stroke="#187a80" stroke-width="1"/>
</svg>
<div class="t " style="left:642.5px;top:795.9px;font-size:32px;color:#13707c;letter-spacing:-1.747px;">100 %</div><div class="a" style="left:876px;top:761px;width:622px;height:65px;background:#effeff;border-radius:18px"></div>
<svg class="a" style="left:888px;top:776.8px" width="40" height="40" viewBox="0 0 40 40">
<circle cx="20" cy="20" r="20" fill="#1a6370"/><circle cx="20" cy="20" r="12.1" fill="none" stroke="#effeff" stroke-width="2.9"/>
<rect x="18.4" y="13.4" width="3.2" height="3" fill="#effeff"/><rect x="18.4" y="18.6" width="3.2" height="8.6" fill="#effeff"/>
</svg>
<div class="t " style="left:940.3px;top:784.9px;font-size:18.5px;color:#1a6272;letter-spacing:0.306px;">Fassen Sie mehrere komplexe Pfade zu einem Pfad zusammen.</div><div class="a" style="left:876px;top:219px;width:967px;height:526px;background:#fff;border-radius:13px;overflow:hidden">
<svg class="a" style="left:-876px;top:-219px" width="1920" height="1080" viewBox="0 0 1920 1080">
<path d="M999 397.3L1832 437.2M985.5 404.1L1840.5 446.4M971.2 411.3L1849.4 456.1M956.1 418.9L1859 466.3M940.2 426.9L1869.1 477.3M923.5 435.3L1879.9 489M905.8 444.3L1891.4 501.4M887 453.7L1903.8 514.8M867.1 463.7L1917 529.1M846 474.4L1931.3 544.5M823.5 485.7L1946.7 561.2M799.5 497.8L1963.3 579.2M773.8 510.7L1981.4 598.7M746.3 524.6L2001.1 620M716.8 539.5L2022.7 643.4M650.6 572.9L2072.5 697.2M613.3 591.6L2101.5 728.6M572.8 612L2133.8 763.5M528.6 634.3L2170.1 802.8M480.2 658.7L2211.2 847.2M426.9 685.6L2258 897.8M368 715.3L2311.8 956M302.5 748.3L2374.5 1023.7M229.3 785.2L2448.1 1103.4M146.9 826.7L2536.1 1198.6M53.4 873.8L2643.1 1314.2M-53.4 927.6L2775.8 1457.7M-176.8 989.8L2944.9 1640.5M-320.9 1062.4L3167.6 1881.4M-491.4 1148.3L3474.5 2213.2" stroke="#9c9c9c" stroke-width="1" fill="none"/>
<path d="M999 397.3L-491.4 1148.3M1023.1 398.4L-426.2 1165.8M1047.4 399.6L-358.7 1184M1071.9 400.7L-288.7 1202.8M1096.6 401.9L-216.2 1222.2M1121.6 403.1L-140.9 1242.4M1146.8 404.3L-62.8 1263.4M1172.2 405.6L18.4 1285.2M1197.9 406.8L102.9 1307.9M1223.8 408L190.7 1331.5M1250 409.3L282.2 1356.1M1276.4 410.6L377.6 1381.7M1303.1 411.8L477.1 1408.4M1330.1 413.1L581.1 1436.3M1357.3 414.4L689.7 1465.5M1412.5 417.1L922.4 1527.9M1440.5 418.4L1047.2 1561.4M1468.8 419.8L1178.2 1596.6M1497.4 421.2L1315.9 1633.6M1526.3 422.6L1460.7 1672.5M1555.5 424L1613.4 1713.5M1585 425.4L1774.5 1756.7M1614.7 426.8L1944.8 1802.5M1644.8 428.2L2125 1850.8M1675.2 429.7L2316.1 1902.1M1705.9 431.2L2519 1956.6M1736.9 432.7L2734.9 2014.6M1768.3 434.2L2965.1 2076.4M1800 435.7L3211.1 2142.5M1832 437.2L3474.5 2213.2" stroke="#a6a6a6" stroke-width="0.9" fill="none"/>
<path d="M684.9 555.5L2046.3 669M1384.8 415.8L803.3 1496" stroke="#666" stroke-width="2.2" fill="none"/>
<g><ellipse cx="1283.3" cy="602.5" rx="58.3" ry="31" fill="#0b0b0b" transform="rotate(-3 1283.3 602.5)"/>
<path d="M1226.7 610 L1219.7 620.8 L1223.3 624.2 L1250 628.7 L1270 634.2 L1316.7 633 L1324.7 627.5 L1326.7 620 L1266.7 620 Z" fill="#0b0b0b"/>
<path d="M1217.2 582 L1222.5 581.3 L1225 595 L1218.7 592.5 Z" fill="#111"/>
<path d="M1271.3 368 L1285.3 368.8 L1268.7 452 L1306.7 458.3 L1306 465.3 L1268 461.7 L1288.7 488.7 L1281.7 500.8 L1275.8 500.8 L1254.7 459.7 Z" fill="#0b0b0b"/>
<path d="M1278.3 496.7 L1290.8 481.7 L1300 466.7 L1313.3 460 L1343.3 453.3 L1350 454.7 L1360 461.7 L1366 460.7 L1365 480 L1364.2 495 L1358.3 526.7 L1350.8 540.8 L1347.5 538.3 L1334.7 586.7 L1328.3 586.7 L1338.3 528.3 L1333.3 508.3 L1320 491.7 L1306.7 487.5 L1293.3 490 Z" fill="#0b0b0b"/>
<path d="M1346.7 495 L1350.8 480 L1360 481.7 L1356.7 525 L1350.8 536.7 L1348.3 520 Z" fill="#1c1c1c"/>
<defs><linearGradient id="rg1" gradientUnits="userSpaceOnUse" x1="1290" y1="490" x2="1300" y2="615"><stop offset="0" stop-color="#08858a"/><stop offset="0.55" stop-color="#067a7f"/><stop offset="1" stop-color="#056a6f"/></linearGradient></defs>
<path d="M1281.7 500 L1234.2 570 L1235 583.3 L1245.8 606.7 L1293.3 613.7 L1326.7 601.7 L1333.3 585 L1345 536.7 L1339.2 526.7 L1337.5 513.3 Q1333.3 498.3 1320 491.7 Q1306.7 485.8 1293.3 490.8 Z" fill="url(#rg1)"/>
<path d="M1234.2 570 L1235 583.3 L1245.8 606.7 L1293.3 613.7 L1326.7 601.7 L1333.3 585 L1335.8 575 L1316.7 590 L1286.7 596.7 L1255 590 L1241.7 570 L1238.3 565 Z" fill="#06757a"/>
<path d="M1331.7 501.7 L1337.5 513.3 L1339.2 526.7 L1345 536.7 L1333.3 585 L1326.7 601.7 L1331.7 570 L1336.7 536.7 L1333.3 516.7 L1325 500 Z" fill="#056a6e"/>
<path d="M1324.2 497.5 L1331.7 503.3 L1337.5 515.8 L1335.3 516.3 L1330 505.8 Z" fill="#2aa5a8"/>
<circle cx="1306.8" cy="517.5" r="12.6" fill="none" stroke="#0b0b0b" stroke-width="1.7"/>
<path d="M1296.3 525.8 L1293.3 517.5 L1295.8 509.2 L1303.3 504.2 L1311.7 504.2 L1317.7 507 Z" fill="#0b0b0b"/>
<g transform="translate(1240 320) scale(0.166667)">
<path d="M215 78 L300 72 L720 92 L790 100 L790 305 L205 296 A100 100 0 0 1 140 135 Q170 88 215 78 Z" fill="#0b0b0b"/>
<path d="M222 103 L720 120 L785 105 L785 300 L212 291 A94 94 0 0 1 222 103 Z" fill="#067b80"/>
<path d="M720 120 L785 105 L785 150 L735 150 Z" fill="#0a8d92"/>
<path d="M474 305 A106 106 0 0 1 686 300 L708 325 L620 880 L585 930 L400 885 Z" fill="#0b0b0b"/>
<path d="M490 302 A89 89 0 0 1 668 300 L585 925 L400 880 Z" fill="#067b80"/>
<path d="M668 300 L690 318 L612 850 L590 900 Z" fill="#2a2a2a"/>
<path d="M785 112 L852 118 L852 298 L785 298 Z" fill="#0b0b0b"/>
<path d="M795 150 L845 152 L845 175 L795 172 Z" fill="#1f1f1f"/>
</g>
<g transform="translate(1370 320) scale(0.1041667)">
<path d="M110 215 L150 162 L250 150 L1180 176 L1290 208 L1306 235 L1306 500 L1280 522 L1180 566 L1090 570 L118 508 Z" fill="#0b0b0b"/>
<path d="M116 218 L150 170 L290 275 L1060 262 Q1150 275 1215 345 Q1262 430 1215 510 Q1160 568 1090 568 L120 505 Z" fill="#067b80"/>
<path d="M116 218 L150 170 L290 275 L290 517 L120 505 Z" fill="#056a6e"/>
<rect x="645" y="355" width="236" height="125" rx="14" fill="#0b0b0b"/>
<circle cx="1085" cy="425" r="136" fill="#06787d"/>
<path d="M950 400 L1010 330 L1110 330 L1160 400 L1040 530 Z" fill="#05696e"/>
<path d="M1040 530 L1110 430 L1130 440 L1060 535 Z" fill="#2aa5a8"/>
</g>
<path d="M1506 347.9 L1511.7 347.3 L1511.7 370.8 L1506 370 Z" fill="#7d7d7d"/>
<path d="M1511.7 348.6 L1515.8 347.9 L1532.5 350.7 L1540.8 350 L1540.8 366.4 L1532.5 366 L1511.7 369 Z" fill="#b3b3b3"/>
<path d="M1511.7 348.6 L1515.8 347.9 L1532.5 350.7 L1532.5 366 L1511.7 369 Z" fill="#9a9a9a"/>
<path d="M1515.8 349.2 L1531.5 351.8 L1531.5 364.8 L1515.8 363.8 Z" fill="#a9a9a9"/>
<path d="M1539.3 350 L1557.5 349.7 L1558.1 355.9 L1547.1 355.9 L1540.8 354.9 Z" fill="#a2a2a2"/>
<path d="M1539.3 365 L1547.1 365.8 L1557.5 366.4 L1557.1 372.3 L1539.3 371 Z" fill="#a2a2a2"/>
<path d="M1540.8 350 L1557.5 349.7 L1557.7 351.8 L1540.8 351.8 Z" fill="#c2c2c2"/>
<path d="M1540.8 365.8 L1557.5 366.4 L1557.5 368.1 L1540.8 367.4 Z" fill="#bdbdbd"/></g>
</svg>
</div>
<div class="a" style="left:890.5px;top:233px;width:81px;height:417.5px;background:#fff;border:1px solid #e3e4f2;border-radius:13px;box-shadow:0 1px 2px rgba(170,170,205,.3)"></div>
<div class="vb" style="top:244px"></div>
<div class="vb" style="top:312px"></div>
<div class="vb" style="top:380px"></div>
<div class="vb" style="top:448px"></div>
<div class="vb" style="top:516px"></div>
<div class="vb" style="top:584px"></div>
<svg class="a" style="left:0;top:0" width="1920" height="1080" viewBox="0 0 1920 1080"><g fill="none" stroke="#0d464e" stroke-width="2.6">
<circle cx="927.3" cy="268.8" r="8"/><path d="M933.2 275 L941.8 282.8" stroke-width="3"/><path d="M923.6 268.8 H931" stroke-width="1.5"/><path d="M927.3 265.1 V272.5" stroke-width="1.5"/><circle cx="927.3" cy="336.8" r="8"/><path d="M933.2 343 L941.8 350.8" stroke-width="3"/><path d="M923.6 336.8 H931" stroke-width="1.5"/>
<g stroke-width="2.8"><path d="M931 422 V396 M921.6 405.3 L931 395.9 L940.4 405.3"/><path d="M931 462.5 V488.5 M921.6 479.2 L931 488.6 L940.4 479.2"/><path d="M917.5 544 H943.5 M934.2 534.6 L943.6 544 L934.2 553.4"/><path d="M944.5 612 H918.5 M927.8 602.6 L918.4 612 L927.8 621.4"/></g></g></svg>
<div class="bb" style="left:1473px;width:198px"></div>
<div class="bb" style="left:1677px;width:198px"></div>
<svg class="a" style="left:0;top:0" width="1920" height="1080" viewBox="0 0 1920 1080">
<defs><radialGradient id="rg" cx="0.5" cy="0.5" r="0.5"><stop offset="0.86" stop-color="#434447"/><stop offset="0.93" stop-color="#4b4c4f"/><stop offset="1" stop-color="#434447"/></radialGradient><linearGradient id="bg1" x1="0.15" y1="0.15" x2="0.85" y2="0.85"><stop offset="0" stop-color="#13858a"/><stop offset="0.55" stop-color="#4bb0b0"/><stop offset="1" stop-color="#74cdc9"/></linearGradient></defs>
<circle cx="1673.8" cy="896.4" r="97.4" fill="url(#rg)" stroke="#1f2022" stroke-width="1.6"/>
<circle cx="1673.8" cy="896.4" r="85.5" fill="url(#bg1)" stroke="#202124" stroke-width="1.2"/>
<g fill="#fff"><rect x="1658" y="825.3" width="34.5" height="6.8"/><rect x="1658" y="835" width="34.5" height="6.8"/><rect x="1658" y="844.7" width="34.5" height="6.8"/></g>
<g fill="#c9c9c9"><circle cx="1659" cy="828.7" r="3.8"/><circle cx="1659" cy="838.4" r="3.8"/><circle cx="1659" cy="848.1" r="3.8"/></g>
<path d="M1661.5 873.5 H1689.5 M1675.5 859.5 V887.5" stroke="#fff" stroke-width="3.2" stroke-linecap="round" fill="none"/>
<path d="M1608 896.9 H1740" stroke="#fff" stroke-width="1.8"/>
<path d="M1497.8 963 L1484.8 972 L1497.8 981.1 Z" fill="#fff"/>
<path d="M1497 972 H1512.2 a10.05 10.05 0 0 1 0 20.1 H1484.8" fill="none" stroke="#fff" stroke-width="3.9"/>
<path d="M1832.35 964.15 L1859.85 991.65 M1859.85 964.15 L1832.35 991.65" stroke="#fff" stroke-width="4.7" stroke-linecap="round" fill="none"/>
</svg>
<div class="t " style="left:1612.3px;top:910.1px;font-size:16.5px;color:#fff;letter-spacing:0.325px;">Zum Programm</div><div class="t " style="left:1632.3px;top:929.3px;font-size:16.5px;color:#fff;letter-spacing:0.376px;">hinzufügen</div><div class="t " style="left:1483px;top:1010.2px;font-size:17px;color:#fff;letter-spacing:0.33px;">Zurücksetzen</div><div class="t " style="left:1789.8px;top:1010.1px;font-size:17px;color:#fff;letter-spacing:-0.066px;">Schließen</div></body></html>
